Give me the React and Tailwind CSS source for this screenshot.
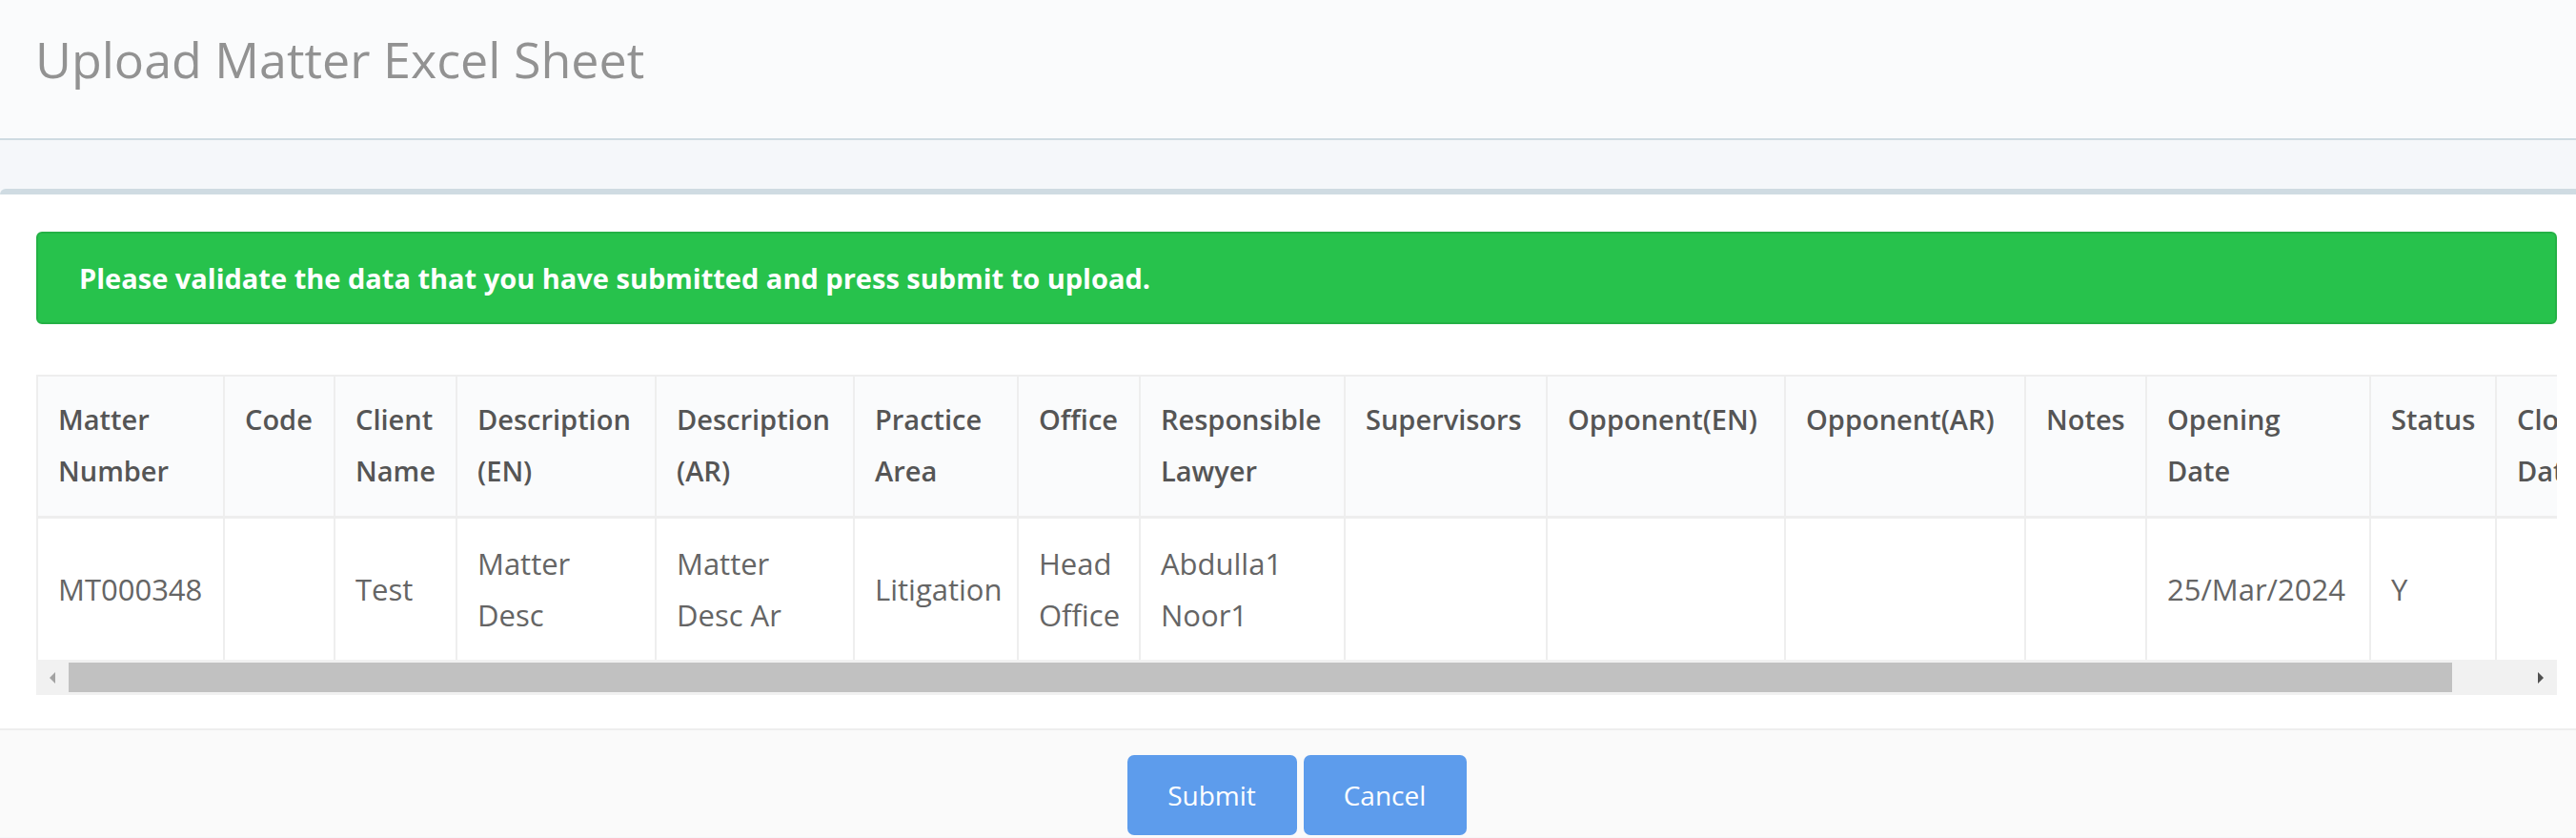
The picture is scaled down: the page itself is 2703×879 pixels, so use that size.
import React from 'react';

const columns = [
  { key: 'matterNumber', title: ['Matter', 'Number'], width: 'w-[196px]' },
  { key: 'code', title: ['Code'], width: 'w-[116px]' },
  { key: 'clientName', title: ['Client', 'Name'], width: 'w-[128px]' },
  { key: 'descEn', title: ['Description', '(EN)'], width: 'w-[209px]' },
  { key: 'descAr', title: ['Description', '(AR)'], width: 'w-[208px]' },
  { key: 'practiceArea', title: ['Practice', 'Area'], width: 'w-[172px]' },
  { key: 'office', title: ['Office'], width: 'w-[128px]' },
  { key: 'lawyer', title: ['Responsible', 'Lawyer'], width: 'w-[215px]' },
  { key: 'supervisors', title: ['Supervisors'], width: 'w-[212px]' },
  { key: 'opponentEn', title: ['Opponent(EN)'], width: 'w-[250px]' },
  { key: 'opponentAr', title: ['Opponent(AR)'], width: 'w-[252px]' },
  { key: 'notes', title: ['Notes'], width: 'w-[127px]' },
  { key: 'openingDate', title: ['Opening', 'Date'], width: 'w-[235px]' },
  { key: 'status', title: ['Status'], width: 'w-[132px]' },
  { key: 'closingDate', title: ['Closing', 'Date'], width: 'w-[220px]' },
  { key: 'remarks', title: ['Remarks'], width: 'w-[200px]' },
];

const rows = [
  {
    matterNumber: ['MT000348'],
    code: [],
    clientName: ['Test'],
    descEn: ['Matter', 'Desc'],
    descAr: ['Matter', 'Desc Ar'],
    practiceArea: ['Litigation'],
    office: ['Head', 'Office'],
    lawyer: ['Abdulla1', 'Noor1'],
    supervisors: [],
    opponentEn: [],
    opponentAr: [],
    notes: [],
    openingDate: ['25/Mar/2024'],
    status: ['Y'],
    closingDate: [],
    remarks: [],
  },
];

const FakeScrollbar = () => (
  <div className="flex h-[37px] items-center bg-[#f1f1f1]">
    <div className="flex w-[34px] justify-center">
      <svg width="10" height="14" viewBox="0 0 10 14">
        <polygon points="8,1 8,13 2,7" fill="#a3a3a3" />
      </svg>
    </div>
    <div className="h-[31px] w-[2501px] bg-[#c1c1c1]" />
    <div className="flex-1" />
    <div className="flex w-[34px] justify-center">
      <svg width="10" height="14" viewBox="0 0 10 14">
        <polygon points="2,1 2,13 8,7" fill="#505050" />
      </svg>
    </div>
  </div>
);

const App = () => {
  return (
    <div className="min-h-screen bg-[#f5f7fa] font-['Open_Sans',sans-serif]">
      <div className="h-[147px] border-b-2 border-[#cfdbe2] bg-[#fafbfc] pl-[37px] pt-[26px]">
        <h1 className="text-[52px] font-normal leading-[72px] text-[#929292]">Upload Matter Excel Sheet</h1>
      </div>

      <div className="h-[51px]" />

      <div className="rounded-tl-[6px] border-t-[6px] border-[#cfdbe2] bg-white">
        <div className="pl-[38px] pr-[20px] pt-[39px] pb-[35px]">
          <div className="flex h-[97px] items-center rounded-[6px] border-2 border-[#24b145] bg-[#27c24c] pl-[43px]">
            <p className="text-[29px] font-bold text-white">
              Please validate the data that you have submitted and press submit to upload.
            </p>
          </div>

          <div className="mt-[53px] overflow-hidden">
            <table className="w-[3000px] table-fixed border-collapse text-[31px] leading-[54px]">
              <colgroup>
                {columns.map(col => (
                  <col key={col.key} className={col.width} />
                ))}
              </colgroup>
              <thead>
                <tr className="bg-[#fafbfc]">
                  {columns.map(col => (
                    <th
                      key={col.key}
                      className="border-x-2 border-t-2 border-b-[3px] border-[#eeeeee] px-[21px] pt-[18px] pb-[20px] text-left align-top text-[29px] font-semibold whitespace-nowrap text-[#555555]"
                    >
                      {col.title.map(line => (
                        <div key={line}>{line}</div>
                      ))}
                    </th>
                  ))}
                </tr>
              </thead>
              <tbody>
                {rows.map(row => (
                  <tr key={row.matterNumber[0]} className="h-[149px]">
                    {columns.map(col => (
                      <td
                        key={col.key}
                        className="border-x-2 border-[#eeeeee] px-[21px] py-[20px] align-middle whitespace-nowrap text-[#656565]"
                      >
                        {row[col.key].map(line => (
                          <div key={line}>{line}</div>
                        ))}
                      </td>
                    ))}
                  </tr>
                ))}
              </tbody>
            </table>
            <FakeScrollbar />
          </div>
        </div>

        <div className="flex h-[114px] justify-center border-t-2 border-[#eeeeee] bg-[#fafafa] pt-[26px] pl-[18px]">
          <div className="flex gap-[7px]">
            <button className="h-[84px] w-[178px] rounded-[7px] bg-[#5d9cec] text-[28px] text-white">
              Submit
            </button>
            <button className="h-[84px] w-[171px] rounded-[7px] bg-[#5d9cec] text-[28px] text-white">
              Cancel
            </button>
          </div>
        </div>
      </div>
    </div>
  );
};

export default App;
